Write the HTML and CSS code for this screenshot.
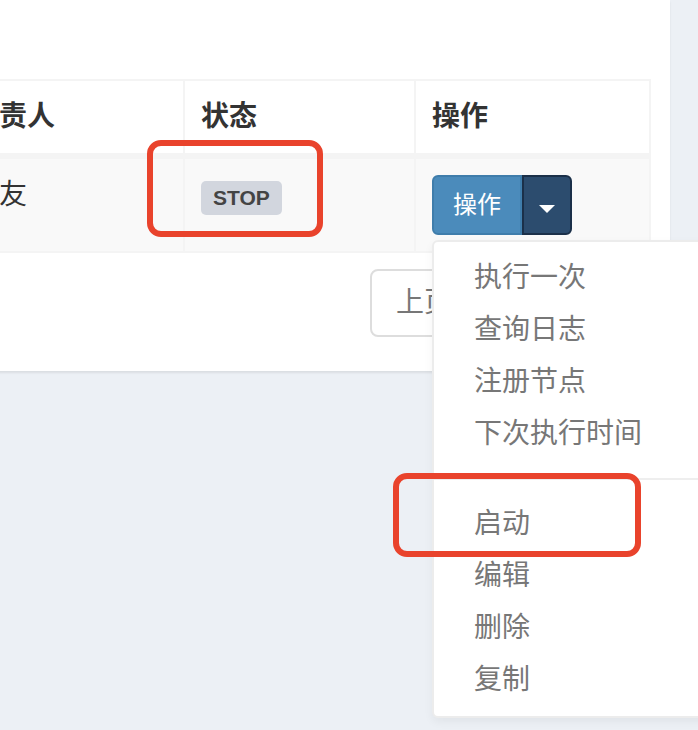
FILE: index.html
```html
<!DOCTYPE html>
<html lang="zh-CN">
<head>
  <meta charset="UTF-8" />
  <meta name="viewport" content="width=device-width, initial-scale=1.0"/>
  <title>任务列表</title>
  <link rel="stylesheet" href="styles.css">
</head>
<body>

<div class="page">
  <div class="box">
    <table class="grid">
      <colgroup>
        <col class="col-owner">
        <col class="col-status">
        <col class="col-action">
      </colgroup>
      <thead>
        <tr>
          <th>负责人</th>
          <th>状态</th>
          <th>操作</th>
        </tr>
      </thead>
      <tbody>
        <tr>
          <td>王友</td>
          <td><span class="label">STOP</span></td>
          <td>
            <div class="btn-group">
              <button type="button" class="btn">操作</button>
              <button type="button" class="btn toggle"><span class="caret"></span></button>
              <ul class="menu">
                <li><a href="#">执行一次</a></li>
                <li><a href="#">查询日志</a></li>
                <li><a href="#">注册节点</a></li>
                <li><a href="#">下次执行时间</a></li>
                <li class="divider"></li>
                <li><a href="#">启动</a></li>
                <li><a href="#">编辑</a></li>
                <li><a href="#">删除</a></li>
                <li><a href="#">复制</a></li>
              </ul>
            </div>
          </td>
        </tr>
      </tbody>
    </table>

    <div class="pager">
      <a href="#">上页</a>
      <a href="#">下页</a>
    </div>
  </div>
</div>

<!-- annotation marks -->
<div class="mark mark-status"></div>
<div class="mark mark-start"></div>

</body>
</html>
```

FILE: styles.css
```css
html,
body {
  overflow: hidden;
}

body {
  margin: 0;
  height: 730px;
  position: relative;
  background-color: #ecf0f5;
  font-family: "Liberation Sans", "Noto Sans CJK SC", sans-serif;
  font-size: 28px;
  line-height: 40px;
  color: #333;
}

.page {
  width: 737px;
  margin-left: -67px;
}

.box {
  background-color: #fff;
  padding: 79px 21px 0 20px;
  box-shadow: 0 2px 2px rgba(0,0,0,0.08);
}

.grid {
  width: 696px;
  table-layout: fixed;
  border-collapse: collapse;
  border: 2px solid #f4f4f4;
}

.col-owner { width: 230px; }
.col-status { width: 231px; }
.col-action { width: 235px; }

.grid th,
.grid td {
  border: 2px solid #f4f4f4;
  padding: 16px;
  text-align: left;
  vertical-align: top;
  white-space: nowrap;
}

.grid th {
  font-weight: bold;
  border-bottom-width: 6px;
}

.grid tbody tr {
  background-color: #f9f9f9;
}

.label {
  display: inline-block;
  vertical-align: top;
  margin-top: 6px;
  padding: 5px 12px;
  font-size: 21px;
  line-height: 24px;
  font-weight: bold;
  color: #444;
  background-color: #d2d6de;
  border-radius: 5px;
}

.btn-group {
  position: relative;
  display: inline-flex;
  vertical-align: top;
}

.btn {
  font-family: inherit;
  font-size: 24px;
  line-height: 36px;
  padding: 10px 19px;
  border: 2px solid #3f7dab;
  background-color: #4b8bbb;
  color: #fff;
  border-radius: 6px 0 0 6px;
  margin: 0;
}

.btn.toggle {
  padding: 10px 15px;
  background-color: #2c4c6e;
  border-color: #1b3049;
  border-radius: 0 6px 6px 0;
}

.caret {
  display: inline-block;
  vertical-align: middle;
  margin-top: 4px;
  border-top: 8px solid #fff;
  border-left: 8px solid transparent;
  border-right: 8px solid transparent;
}

.menu {
  position: absolute;
  top: 100%;
  left: 0;
  width: 300px;
  margin: 5px 0 0;
  padding: 10px 0;
  list-style: none;
  background-color: #fff;
  border: 2px solid #ececec;
  border-radius: 6px;
  box-shadow: 0 4px 10px rgba(0,0,0,0.05);
}

.menu a {
  display: block;
  padding: 6px 40px;
  font-size: 28px;
  line-height: 40px;
  color: #777;
  text-decoration: none;
}

.menu .divider {
  height: 2px;
  margin: 18px 0;
  background-color: #eee;
}

.pager {
  display: flex;
  justify-content: flex-end;
  gap: 10px;
  padding: 16px 53px 34px 0;
}

.pager a {
  padding: 12px 24px;
  border: 2px solid #ddd;
  border-radius: 8px;
  color: #777;
  text-decoration: none;
  background-color: #fff;
}

.mark {
  position: absolute;
  box-sizing: border-box;
  border: 6px solid #e9432c;
  border-radius: 14px;
}

.mark-status {
  left: 147px;
  top: 140px;
  width: 176px;
  height: 97px;
}

.mark-start {
  left: 393px;
  top: 473px;
  width: 248px;
  height: 84px;
}
```
